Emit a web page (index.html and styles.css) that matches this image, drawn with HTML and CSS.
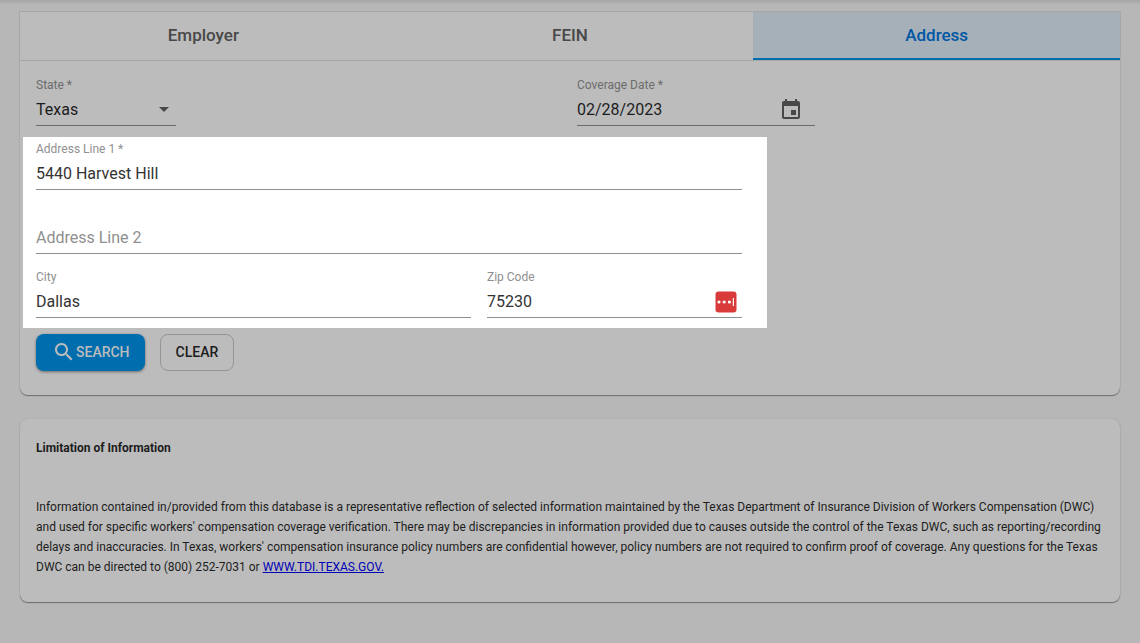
FILE: index.html
```html
<!DOCTYPE html>
<html lang="en">

<head>
    <meta charset="UTF-8" />
    <meta name="viewport" content="width=device-width, initial-scale=1.0" />
    <title>Coverage Verification: Address Search</title>
    <link rel="stylesheet" href="styles.css">
</head>

<body>
    <main>
        <div class="tabs" role="tablist">
            <button type="button" class="tab" role="tab">Employer</button>
            <button type="button" class="tab" role="tab">FEIN</button>
            <button type="button" class="tab active" role="tab" aria-selected="true">Address</button>
        </div>

        <form class="card search-card">
            <div class="top-row">
                <div class="field state">
                    <label for="state">State *</label>
                    <div class="control">
                        <select id="state">
                            <option>Texas</option>
                        </select>
                        <svg class="arrow" viewBox="0 0 10 5"><path d="M0 0h10L5 5z" /></svg>
                    </div>
                </div>
                <div class="field date">
                    <label for="coverage-date">Coverage Date *</label>
                    <div class="control">
                        <input type="text" id="coverage-date" value="02/28/2023" />
                        <button type="button" class="calendar" aria-label="Open calendar">
                            <svg viewBox="0 0 24 24"><path d="M17 12h-5v5h5v-5zM16 1v2H8V1H6v2H5c-1.11 0-1.99.9-1.99 2L3 19c0 1.1.89 2 2 2h14c1.1 0 2-.9 2-2V5c0-1.1-.9-2-2-2h-1V1h-2zm3 18H5V8h14v11z" /></svg>
                        </button>
                    </div>
                </div>
            </div>

            <!-- highlighted step -->
            <div class="spotlight">
                <div class="field">
                    <label for="address1">Address Line 1 *</label>
                    <div class="control">
                        <input type="text" id="address1" value="5440 Harvest Hill" />
                    </div>
                </div>
                <div class="field no-label">
                    <div class="control">
                        <input type="text" id="address2" placeholder="Address Line 2" aria-label="Address Line 2" />
                    </div>
                </div>
                <div class="city-row">
                    <div class="field">
                        <label for="city">City</label>
                        <div class="control">
                            <input type="text" id="city" value="Dallas" />
                        </div>
                    </div>
                    <div class="field">
                        <label for="zip">Zip Code</label>
                        <div class="control">
                            <input type="text" id="zip" value="75230" />
                            <svg class="autofill" viewBox="0 0 22 22">
                                <rect x="0.5" y="0.5" width="21" height="21" rx="3" fill="#d93b3a" />
                                <g fill="#fff">
                                    <circle cx="4" cy="11" r="1.6" />
                                    <circle cx="9.2" cy="11" r="1.6" />
                                    <circle cx="14.4" cy="11" r="1.6" />
                                    <rect x="17.8" y="7" width="1.2" height="8" />
                                </g>
                            </svg>
                        </div>
                    </div>
                </div>
            </div>

            <div class="actions">
                <button type="button" class="btn btn-search">
                    <svg viewBox="0 0 24 24"><path d="M15.5 14h-.79l-.28-.27C15.41 12.59 16 11.11 16 9.5 16 5.91 13.09 3 9.5 3S3 5.91 3 9.5 5.91 16 9.5 16c1.61 0 3.09-.59 4.23-1.57l.27.28v.79l5 4.99L20.49 19l-4.99-5zm-6 0C7.01 14 5 11.99 5 9.5S7.01 5 9.5 5 14 7.01 14 9.5 11.99 14 9.5 14z" /></svg>SEARCH
                </button>
                <button type="button" class="btn btn-clear">CLEAR</button>
            </div>
        </form>

        <section class="card info-card">
            <h2>Limitation of Information</h2>
            <p>Information contained in/provided from this database is a representative reflection of selected information maintained by the Texas Department of Insurance Division of Workers Compensation (DWC) and used for specific workers' compensation coverage verification. There may be discrepancies in information provided due to causes outside the control of the Texas DWC, such as reporting/recording delays and inaccuracies. In Texas, workers' compensation insurance policy numbers are confidential however, policy numbers are not required to confirm proof of coverage. Any questions for the Texas DWC can be directed to (800) 252-7031 or <a href="#">WWW.TDI.TEXAS.GOV.</a></p>
        </section>
    </main>
</body>

</html>
```

FILE: styles.css
```css
* {
    box-sizing: border-box;
}

body {
    margin: 0;
    font-family: Roboto, Arial, sans-serif;
    font-size: 12px;
    color: #1c1c1c;
    background: linear-gradient(#a6a6a6, #b7b7b7 5px) no-repeat #b7b7b7;
    min-height: 100vh;
}

main {
    padding: 11px 19px 24px;
}

button,
input,
select {
    font-family: inherit;
    color: inherit;
}

.tabs {
    display: grid;
    grid-template-columns: repeat(3, 1fr);
    height: 50px;
    background-color: #bcbcbc;
    border: 1px solid #a7a7a7;
}

.tab {
    border: none;
    padding: 0 0 2px;
    background: none;
    font-size: 17px;
    font-weight: 500;
    color: #484848;
}

.tab.active {
    background-color: #a5b0b9;
    border-bottom: 2px solid #006eae;
    padding: 0;
    color: #0057a5;
}

.card {
    margin: 0 1px;
    background-color: #bcbcbc;
    border-radius: 8px;
    box-shadow: 0 1px 1px #6c6c6c, 0 0 2px #a8a8a8;
}

.search-card {
    border-radius: 0 0 8px 8px;
    padding: 16px 3px 24px;
}

.top-row {
    display: grid;
    grid-template-columns: 1fr 1fr;
    gap: 14px;
    padding: 0 13px;
}

.state {
    width: 140px;
}

.date {
    width: 238px;
}

.field label {
    display: block;
    line-height: 16px;
    margin-bottom: 4px;
    color: #6c6c6c;
}

.control {
    display: flex;
    align-items: center;
    height: 29px;
    padding-bottom: 4px;
    border-bottom: 1px solid #6a6a6a;
}

.control input,
.control select {
    flex: 1;
    min-width: 0;
    height: 24px;
    padding: 0;
    border: none;
    outline: none;
    background: none;
    font-size: 16px;
    appearance: none;
}

.arrow {
    width: 10px;
    height: 5px;
    margin-right: 7px;
    fill: #484848;
}

.calendar {
    width: 24px;
    height: 24px;
    margin: 2px 12px 0 0;
    padding: 0;
    border: none;
    background: none;
}

.calendar svg {
    display: block;
    fill: #484848;
}

/* highlighted address fields */
.spotlight {
    width: 68%;
    margin-top: 11px;
    padding: 4px 25px 10px 13px;
    display: grid;
    gap: 15px;
    background-color: #fff;
    color: #333;
}

.spotlight label,
.spotlight input::placeholder {
    color: #8f8f8f;
    opacity: 1;
}

.spotlight .control {
    border-color: #8f8f8f;
}

.no-label {
    padding-top: 20px;
}

.city-row {
    display: grid;
    grid-template-columns: 29fr 17fr;
    gap: 16px;
}

.autofill {
    width: 22px;
    height: 22px;
    margin: 2px 5px 0 0;
}

.actions {
    display: flex;
    gap: 15px;
    margin-top: 6px;
    padding: 0 13px;
}

.btn {
    display: flex;
    align-items: center;
    height: 37px;
    padding: 0 15px 2px 16px;
    border: none;
    border-radius: 8px;
    font-size: 14px;
    font-weight: 500;
}

.btn-search {
    background-color: #006eae;
    color: #bcbcbc;
    box-shadow: 0 1px 3px #6a6a6a;
}

.btn-search svg {
    width: 24px;
    height: 24px;
    fill: #bcbcbc;
}

.btn-clear {
    padding: 0 15px 2px;
    background: none;
    border: 1px solid #959595;
}

.info-card {
    margin-top: 24px;
    padding: 19px 16px 25px;
    line-height: 20px;
}

.info-card h2 {
    margin: 0 0 39px;
    font-size: 12px;
    font-weight: 700;
}

.info-card p {
    margin: 0;
}

.info-card a {
    color: #0000b8;
}
```
